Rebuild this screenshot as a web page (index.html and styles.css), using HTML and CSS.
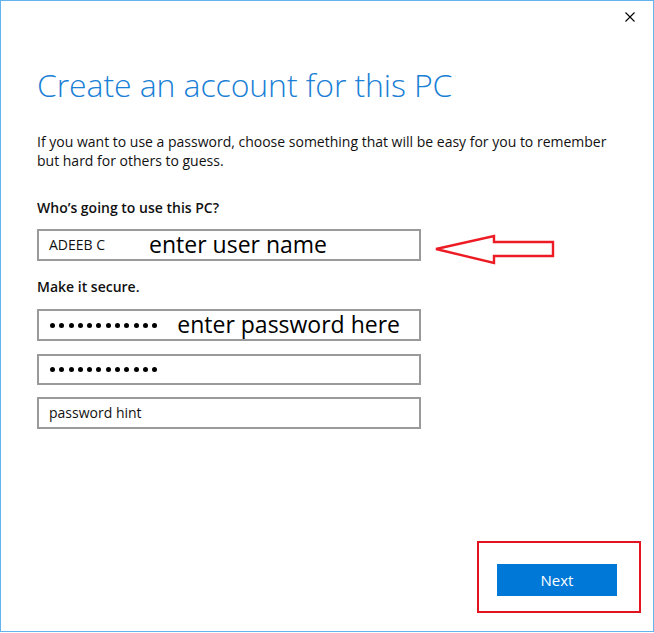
FILE: index.html
```html
<!DOCTYPE html>
<html>
<head>
<meta charset="utf-8">
<link rel="stylesheet" href="styles.css">
</head>
<body>
<div class="window">
  <button class="close" aria-label="Close">
    <svg width="10" height="10" viewBox="0 0 10 10"><path d="M0.5 0.5 L9.5 9.5 M9.5 0.5 L0.5 9.5" stroke="#000" stroke-width="1.1" fill="none"/></svg>
  </button>
  <div class="content">
    <h1 class="title">Create an account for this PC</h1>
    <p class="intro">If you want to use a password, choose something that will be easy for you to remember<br>but hard for others to guess.</p>
    <div class="label label-who">Who’s going to use this PC?</div>
    <div class="field field-user">
      <span class="value">ADEEB C</span>
      <span class="note note-user">enter user name</span>
    </div>
    <div class="label label-secure">Make it secure.</div>
    <div class="field field-pw">
      <span class="dots"><i></i><i></i><i></i><i></i><i></i><i></i><i></i><i></i><i></i><i></i><i></i><i></i></span>
      <span class="note note-pw">enter password here</span>
    </div>
    <div class="field field-pw2">
      <span class="dots"><i></i><i></i><i></i><i></i><i></i><i></i><i></i><i></i><i></i><i></i><i></i><i></i></span>
    </div>
    <div class="field field-hint">
      <span class="value">password hint</span>
    </div>
  </div>
  <div class="footer">
    <div class="highlight">
      <button class="next">Next</button>
    </div>
  </div>
  <svg class="arrow" width="130" height="40" viewBox="0 0 130 40">
    <polygon points="6,19 64,6 64,12 123,12 123,26 64,26 64,33" fill="none" stroke="#ed1c24" stroke-width="2.4" stroke-linejoin="miter"/>
  </svg>
</div>
</body>
</html>
```
FILE: styles.css
```css
* { box-sizing: border-box; }
html, body { margin: 0; padding: 0; background: #fff; }
body {
  width: 654px;
  height: 633px;
  font-family: "Open Sans", "Noto Sans", sans-serif;
  color: #000;
}
.window {
  position: relative;
  width: 654px;
  height: 632px;
  border: 1px solid #63b4ec;
  display: flex;
  flex-direction: column;
}
.close {
  position: absolute;
  top: 11px;
  right: 18px;
  width: 10px;
  height: 10px;
  padding: 0;
  border: 0;
  background: none;
  display: block;
}
.close svg { display: block; }
.content {
  padding-left: 36px;
  padding-top: 64px;
  flex: 1;
}
.title {
  margin: 0;
  font-weight: 300;
  font-size: 32px;
  line-height: 40px;
  color: #1a7fd6;
  letter-spacing: -0.1px;
}
.intro {
  margin: 27px 0 0 0;
  font-size: 14px;
  line-height: 19px;
  color: #111;
}
.label {
  font-weight: 600;
  font-size: 14px;
  line-height: 19px;
  color: #111;
}
.label-who { margin-top: 28px; }
.label-secure { margin-top: 16px; }
.field {
  width: 384px;
  height: 32px;
  border: 2px solid #9a9a9a;
  display: flex;
  align-items: center;
  padding-left: 10px;
  padding-bottom: 2px;
  font-size: 14px;
}
.field-user { margin-top: 12px; }
.field-pw { margin-top: 13px; }
.field-pw2 { margin-top: 13px; height: 31px; }
.field-hint { margin-top: 12px; }
.value { color: #111; }
.note {
  font-size: 23px;
  color: #000;
  line-height: 1;
}
.note-user { margin-left: 44px; }
.note-pw { margin-left: 20px; }
.dots { display: flex; gap: 4.3px; margin-left: 1px; padding-top: 2px; }
.dots i {
  display: block;
  width: 5px;
  height: 5px;
  border-radius: 50%;
  background: #000;
}
.footer {
  display: flex;
  justify-content: flex-end;
  padding-right: 12px;
  padding-bottom: 18px;
}
.highlight {
  border: 2px solid #e3141f;
  padding: 21px 22px 15px 18px;
}
.next {
  display: block;
  width: 120px;
  height: 32px;
  border: 0;
  background: #0078d7;
  color: #fff;
  font-family: "Open Sans", "Noto Sans", sans-serif;
  font-size: 15px;
  padding: 0;
}
.arrow {
  position: absolute;
  left: 429px;
  top: 229px;
}
```
